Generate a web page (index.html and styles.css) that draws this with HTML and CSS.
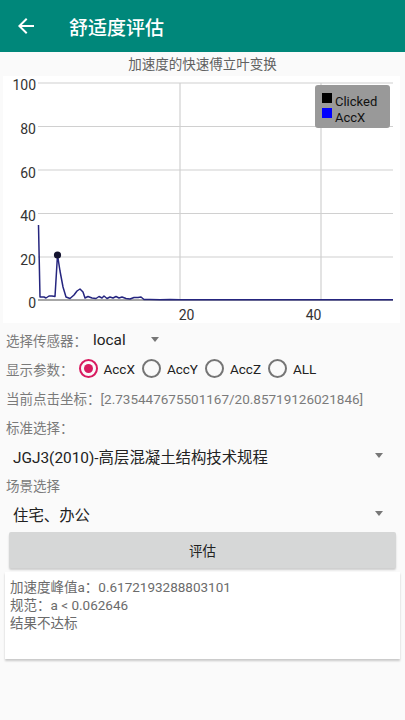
FILE: index.html
```html
<!DOCTYPE html>
<html lang="zh-CN">
<head>
    <meta charset="UTF-8">
    <meta name="viewport" content="width=device-width, initial-scale=1.0">
    <title>舒适度评估</title>
    <link rel="stylesheet" href="styles.css">
</head>
<body>
    <header class="appbar">
        <svg class="back" viewBox="0 0 24 24">
            <path d="M20 11H7.83l5.59-5.59L12 4l-8 8 8 8 1.41-1.41L7.83 13H20v-2z"/>
        </svg>
        <h1 class="appbar-title">舒适度评估</h1>
    </header>

    <p class="chart-title">加速度的快速傅立叶变换</p>
    <div class="chart">
        <svg class="chart-svg" viewBox="3 76 397 247">
            <g class="grid">
                <line x1="38" y1="83" x2="393" y2="83"/>
                <line x1="38" y1="126.5" x2="393" y2="126.5"/>
                <line x1="38" y1="170" x2="393" y2="170"/>
                <line x1="38" y1="213.5" x2="393" y2="213.5"/>
                <line x1="38" y1="257" x2="393" y2="257"/>
                <line x1="180" y1="83" x2="180" y2="300"/>
                <line x1="321" y1="83" x2="321" y2="300"/>
            </g>
            <line class="axis" x1="38" y1="300" x2="393" y2="300"/>
            <g class="ylabels">
                <text x="36" y="90">100</text>
                <text x="36" y="134">80</text>
                <text x="36" y="178">60</text>
                <text x="36" y="221">40</text>
                <text x="36" y="265">20</text>
                <text x="36" y="308">0</text>
            </g>
            <g class="xlabels">
                <text x="186.5" y="320">20</text>
                <text x="313.5" y="320">40</text>
            </g>
            <polyline class="series" points="38.5,225 40,297 44,297 46,298 49,296 52,296 55,296.5 57.5,255 60,271 63,287 66,297 70,298.5 74,295 77,291 80,289 83,292 85,298 88,296.5 92,298 96,298.5 99,296.5 102,298 104,296 107,298.5 110,297 113,298 116,296.5 119,298 122,297 126,298.5 130,299 134,297.5 138,297.5 141,297 144,299.5 150,299.5 160,299.8 170,299.4 180,299.7 393,299.7"/>
            <circle class="clicked" cx="57.5" cy="255" r="3.6"/>
            <rect class="legend" x="315" y="85" width="75" height="43" rx="3"/>
            <rect x="322" y="93" width="10" height="10" fill="#000"/>
            <rect x="322" y="108" width="10" height="10" fill="#0000ff"/>
            <text class="legend-text" x="335" y="106">Clicked</text>
            <text class="legend-text" x="335" y="122">AccX</text>
        </svg>
    </div>

    <div class="row">
        <span class="label">选择传感器：</span>
        <span class="spinner spinner-small">local<i class="caret"></i></span>
    </div>

    <div class="row">
        <span class="label">显示参数：</span>
        <div class="radios">
            <span class="option"><i class="radio checked"></i>AccX</span>
            <span class="option"><i class="radio"></i>AccY</span>
            <span class="option"><i class="radio"></i>AccZ</span>
            <span class="option"><i class="radio"></i>ALL</span>
        </div>
    </div>

    <div class="row">
        <span class="label">当前点击坐标：[2.735447675501167/20.85719126021846]</span>
    </div>

    <div class="row">
        <span class="label">标准选择：</span>
    </div>
    <div class="row spinner-row">
        <span class="spinner-text">JGJ3(2010)-高层混凝土结构技术规程</span>
        <i class="caret"></i>
    </div>

    <div class="row">
        <span class="label">场景选择</span>
    </div>
    <div class="row spinner-row">
        <span class="spinner-text">住宅、办公</span>
        <i class="caret"></i>
    </div>

    <button class="eval-button">评估</button>

    <div class="result">
        <p>加速度峰值a：0.6172193288803101</p>
        <p>规范：a &lt; 0.062646</p>
        <p>结果不达标</p>
    </div>
</body>
</html>
```

FILE: styles.css
```css
* {
    margin: 0;
    padding: 0;
    box-sizing: border-box;
}

body {
    font-family: Roboto, "Noto Sans CJK SC", sans-serif;
    background: #fafafa;
    width: 405px;
    min-height: 720px;
    color: #212121;
}

.appbar {
    height: 52px;
    background: #00877a;
    display: flex;
    align-items: center;
    padding-left: 14px;
}

.back {
    width: 24px;
    height: 24px;
    fill: #fff;
}

.appbar-title {
    color: #fff;
    font-size: 19px;
    font-weight: 500;
    margin-left: 31px;
}

.chart-title {
    height: 24px;
    line-height: 24px;
    text-align: center;
    font-size: 13.5px;
    color: #616161;
}

.chart {
    background: #fff;
    margin: 0 5px 0 3px;
    height: 247px;
}

.chart-svg {
    display: block;
    width: 397px;
    height: 247px;
}

.grid line {
    stroke: #d0d0d0;
    stroke-width: 1.2;
}

.axis {
    stroke: #8a8a8a;
    stroke-width: 1.5;
}

.ylabels text {
    font-family: Roboto, sans-serif;
    font-size: 14px;
    fill: #333;
    text-anchor: end;
}

.xlabels text {
    font-family: Roboto, sans-serif;
    font-size: 14px;
    fill: #333;
    text-anchor: middle;
}

.series {
    fill: none;
    stroke: #25257f;
    stroke-width: 1.5;
    stroke-linejoin: round;
}

.clicked {
    fill: #141430;
}

.legend {
    fill: #999;
}

.legend-text {
    font-family: Roboto, sans-serif;
    font-size: 13px;
    fill: #111;
}

.row {
    height: 29px;
    display: flex;
    align-items: center;
    padding-left: 6px;
}

.chart + .row {
    margin-top: 2px;
}

.label {
    font-size: 13.5px;
    color: #7a7a7a;
}

.spinner {
    font-size: 15.4px;
    color: #222;
    display: flex;
    align-items: center;
}

.spinner-small {
    margin-left: 6px;
    width: 66px;
    justify-content: space-between;
}

.caret {
    display: block;
    width: 0;
    height: 0;
    border-left: 4.5px solid transparent;
    border-right: 4.5px solid transparent;
    border-top: 5px solid #777;
}

.radios {
    display: flex;
    align-items: center;
    gap: 7px;
    margin-left: 5px;
}

.option {
    display: flex;
    align-items: center;
    gap: 6px;
    font-size: 13.5px;
    color: #222;
}

.radio {
    display: block;
    width: 19px;
    height: 19px;
    border: 2px solid #757575;
    border-radius: 50%;
    position: relative;
}

.radio.checked {
    border-color: #d81b60;
}

.radio.checked::after {
    content: '';
    position: absolute;
    left: 3px;
    top: 3px;
    width: 9px;
    height: 9px;
    border-radius: 50%;
    background: #d81b60;
}

.spinner-row {
    padding-left: 13px;
    padding-right: 22px;
    justify-content: space-between;
}

.spinner-text {
    font-size: 15.4px;
    color: #222;
}

.eval-button {
    display: block;
    margin: 4px 9px 0;
    width: 387px;
    height: 36px;
    border: none;
    border-radius: 2px;
    background: #d6d7d7;
    font-family: Roboto, "Noto Sans CJK SC", sans-serif;
    font-size: 13.5px;
    color: #222;
    box-shadow: 0 2px 2px rgba(0, 0, 0, 0.18);
}

.result {
    margin: 4px 5px 0;
    height: 87px;
    background: #fff;
    padding: 6px 5px;
    box-shadow: 0 2px 2px rgba(0, 0, 0, 0.2);
}

.result p {
    font-size: 13.5px;
    line-height: 18px;
    color: #6b6b6b;
}
```
